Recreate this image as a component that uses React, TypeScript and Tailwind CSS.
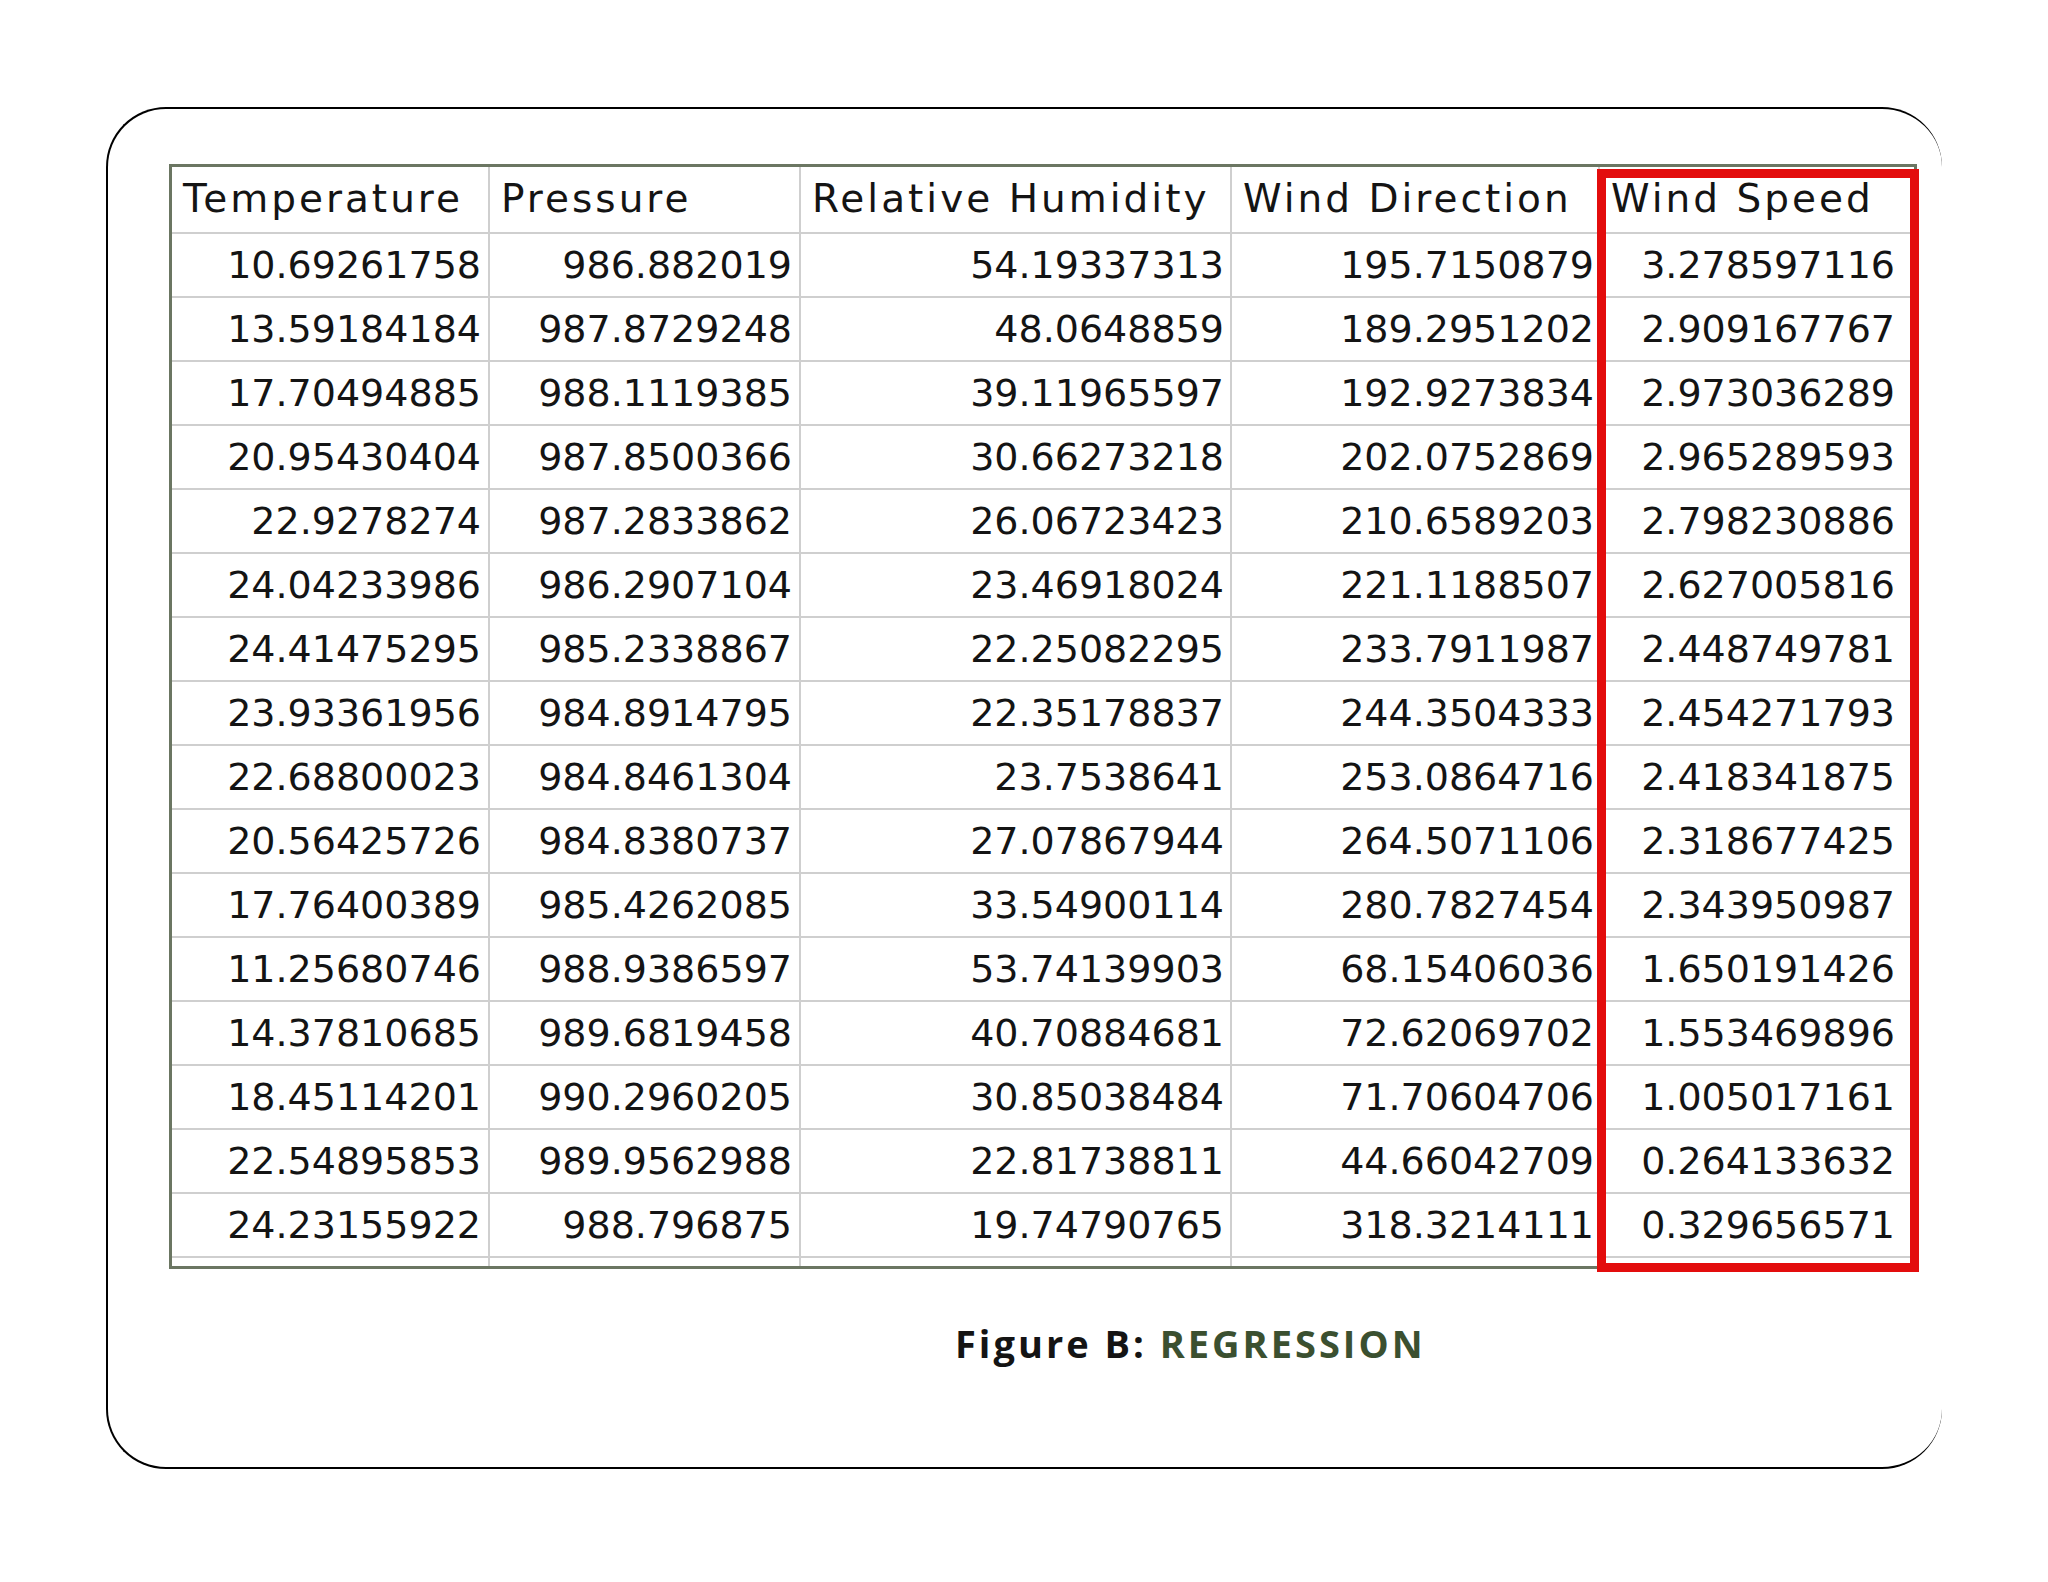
import React from 'react';

const headers = ['Temperature', 'Pressure', 'Relative Humidity', 'Wind Direction', 'Wind Speed'];

const rows: string[][] = [
  ['10.69261758', '986.882019', '54.19337313', '195.7150879', '3.278597116'],
  ['13.59184184', '987.8729248', '48.0648859', '189.2951202', '2.909167767'],
  ['17.70494885', '988.1119385', '39.11965597', '192.9273834', '2.973036289'],
  ['20.95430404', '987.8500366', '30.66273218', '202.0752869', '2.965289593'],
  ['22.9278274', '987.2833862', '26.06723423', '210.6589203', '2.798230886'],
  ['24.04233986', '986.2907104', '23.46918024', '221.1188507', '2.627005816'],
  ['24.41475295', '985.2338867', '22.25082295', '233.7911987', '2.448749781'],
  ['23.93361956', '984.8914795', '22.35178837', '244.3504333', '2.454271793'],
  ['22.68800023', '984.8461304', '23.7538641', '253.0864716', '2.418341875'],
  ['20.56425726', '984.8380737', '27.07867944', '264.5071106', '2.318677425'],
  ['17.76400389', '985.4262085', '33.54900114', '280.7827454', '2.343950987'],
  ['11.25680746', '988.9386597', '53.74139903', '68.15406036', '1.650191426'],
  ['14.37810685', '989.6819458', '40.70884681', '72.62069702', '1.553469896'],
  ['18.45114201', '990.2960205', '30.85038484', '71.70604706', '1.005017161'],
  ['22.54895853', '989.9562988', '22.81738811', '44.66042709', '0.264133632'],
  ['24.23155922', '988.796875', '19.74790765', '318.3214111', '0.329656571'],
];

// right padding of each numeric column
const padR = ['pr-[7px]', 'pr-[7px]', 'pr-[6px]', 'pr-[4px]', 'pr-[19px]'];

const App: React.FC = () => {
  return (
    <div className="w-[2048px] h-[1582px] bg-white pt-[107px] pl-[106px]">
      <div className="w-[1836px] h-[1362px] border-2 border-r-0 border-black rounded-[60px] pt-[55px] pl-[61px]">
        {/* spreadsheet */}
        <div className="relative w-[1748px] border-[3px] border-[#6b7662] font-['DejaVu_Sans',sans-serif] text-[#141414]">
          <div className="grid grid-cols-[318px_311px_431px_368px_314px]">
            {headers.map((h, i) => (
              <div
                key={h}
                className={`h-[67px] flex items-center pl-[11px] text-[39px] tracking-[3px] border-b-2 border-[#cfcfcf] ${i < 4 ? 'border-r-2' : ''}`}
              >
                {h}
              </div>
            ))}
            {rows.map((r, ri) =>
              r.map((v, ci) => (
                <div
                  key={ri + '-' + ci}
                  className={`h-[64px] flex items-center justify-end ${padR[ci]} text-[38px] border-b-2 border-[#cfcfcf] ${ci < 4 ? 'border-r-2' : ''}`}
                >
                  {v}
                </div>
              ))
            )}
            {headers.map((h, i) => (
              <div key={'pad-' + h} className={`h-[8px] border-[#cfcfcf] ${i < 4 ? 'border-r-2' : ''}`} />
            ))}
          </div>
          {/* highlight around Wind Speed */}
          <div className="absolute left-[1425px] top-[2px] w-[322px] h-[1103px] border-[9px] border-[#e30d0d]" />
        </div>

        <div className="mt-[52px] pl-[786px] font-['Open_Sans',sans-serif] font-bold text-[38px] tracking-[3px] leading-[44px]">
          <span className="text-[#141414]">Figure B: </span>
          <span className="text-[#3b5030]">REGRESSION</span>
        </div>
      </div>
    </div>
  );
};

export default App;
